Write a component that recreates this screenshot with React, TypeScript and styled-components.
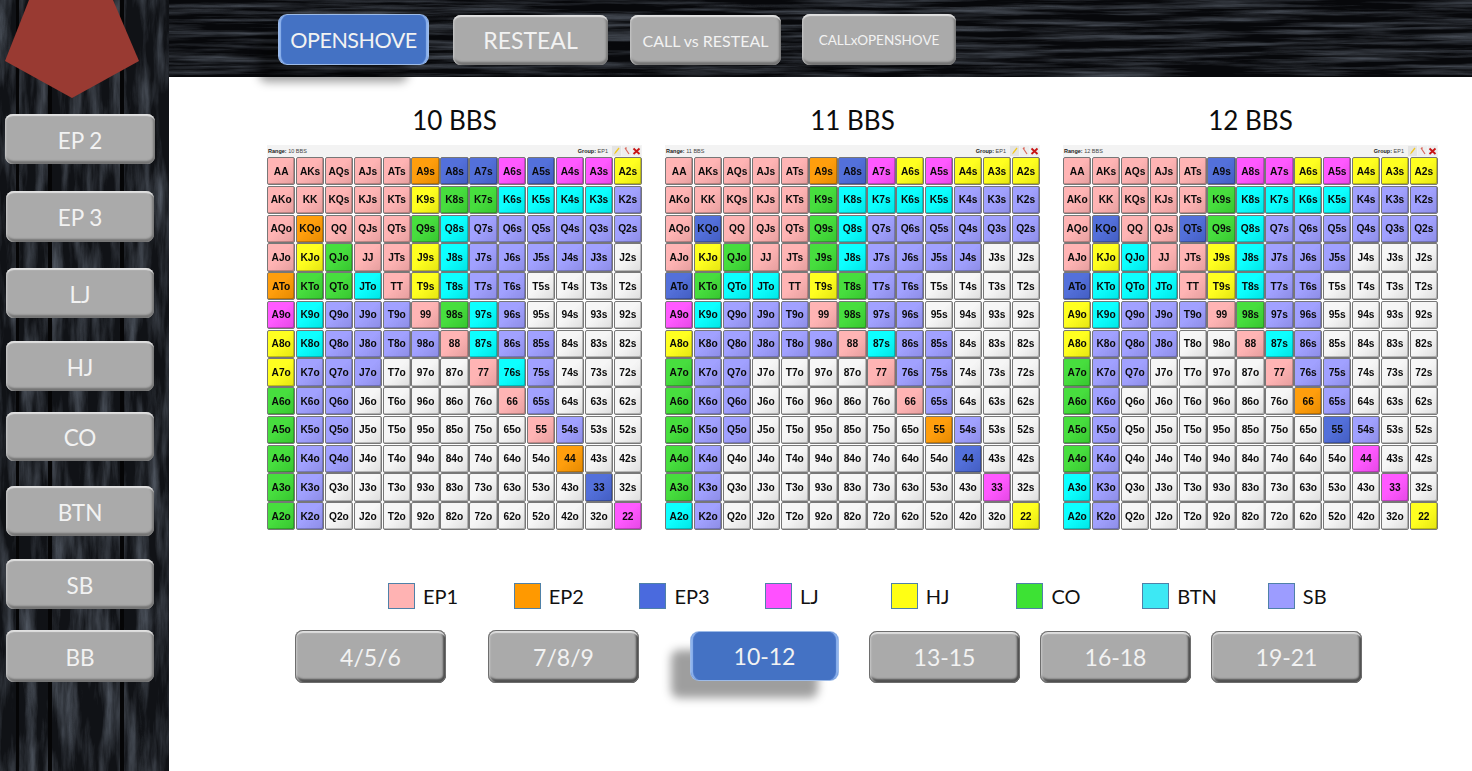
import React from "react";
import styled, { createGlobalStyle, css } from "styled-components";

const woodTexture = (freq: string, seed: number) =>
  `url("data:image/svg+xml,%3Csvg xmlns='http://www.w3.org/2000/svg' width='1400' height='800'%3E%3Cfilter id='w'%3E%3CfeTurbulence type='fractalNoise' baseFrequency='${freq}' numOctaves='5' seed='${seed}'/%3E%3CfeColorMatrix values='0 0 0 0 .17 0 0 0 0 .2 0 0 0 0 .25 1.3 0 0 0 -.5'/%3E%3C/filter%3E%3Crect width='1400' height='800' filter='url(%23w)'/%3E%3C/svg%3E")`;

const GlobalStyle = createGlobalStyle`
  html, body {
    margin: 0;
    padding: 0;
    background: #fff;
    overflow: hidden;
  }
  * {
    box-sizing: border-box;
  }
`;

const Page = styled.div`
  display: grid;
  grid-template-columns: 169px 1fr;
  width: 1472px;
  height: 771px;
  font-family: Lato, "Liberation Sans", sans-serif;
  overflow: hidden;
`;

const Sidebar = styled.aside`
  display: flex;
  flex-direction: column;
  align-items: flex-start;
  background-color: #101216;
  background-image:
    linear-gradient(
      90deg,
      transparent 16px,
      #050506 16px,
      #050506 19px,
      transparent 19px,
      transparent 48px,
      #050506 48px,
      #050506 52px,
      transparent 52px,
      transparent 120px,
      #050506 120px,
      #050506 124px,
      transparent 124px
    ),
    ${woodTexture("0.08 0.012", 4)};
`;

const Logo = styled.svg`
  display: block;
  width: 143px;
  height: 98px;
  margin-bottom: 16px;
  flex: none;
`;

const Content = styled.div`
  display: flex;
  flex-direction: column;
  min-width: 0;
`;

const TopBar = styled.nav`
  position: relative;
  z-index: 1;
  display: flex;
  align-items: flex-start;
  height: 77px;
  padding: 15px 0 0 110px;
  background-color: #07080b;
  background-image: ${woodTexture("0.008 0.2", 9)};
`;

const bevel = css`
  background: #aaaaaa;
  box-shadow:
    inset 0 4px 1px -2px #e0e0e0,
    inset 2px 0 2px -1px #c8c8c8,
    inset -3px 0 2px -1px #7a7a7a,
    inset 0 -4px 2px -1px #727272;
`;

const active = css`
  background: #4472c4;
  box-shadow:
    inset 3px 0 1px -1px #8fb4ee,
    inset -3px 0 1px -1px #8fb4ee,
    0 0 0 1px #9dbbe8,
    -20px 18px 10px rgba(0, 0, 0, 0.38);
`;

const Button = styled.button<{ $active?: boolean; $w: number; $h: number; $gap?: number; $size: number; $edge?: boolean; $track?: number }>`
  display: flex;
  align-items: center;
  justify-content: center;
  flex: none;
  width: ${(p) => p.$w}px;
  height: ${(p) => p.$h}px;
  margin: 0;
  padding: 0;
  border: none;
  border-radius: 8px;
  font-family: inherit;
  font-size: ${(p) => p.$size}px;
  letter-spacing: ${(p) => p.$track ?? 0}px;
  color: #f2f2f2;
  ${(p) => (p.$active ? active : bevel)}
  ${(p) =>
    p.$edge &&
    !p.$active &&
    css`
      box-shadow:
        inset 0 0 0 1px #6e6e6e,
        inset 0 4px 1px -1px #dedede,
        inset 3px 0 2px -1px #c8c8c8,
        inset -4px 0 2px -1px #4e4e4e,
        inset 0 -5px 2px -1px #505050;
    `}
`;

const SideButton = styled(Button)<{ $top: number; $left: number }>`
  margin-top: ${(p) => p.$top}px;
  margin-left: ${(p) => p.$left}px;
  padding-top: 2px;
`;

const SpacedButton = styled(Button)<{ $left: number; $top?: number }>`
  margin-left: ${(p) => p.$left}px;
  margin-top: ${(p) => p.$top ?? 0}px;
`;

const Main = styled.main`
  flex: 1;
  padding: 24px 0 0 98px;
  background: #fff;
`;

const Charts = styled.div`
  display: grid;
  grid-template-columns: repeat(3, 375px);
  column-gap: 23px;
`;

const ChartBlock = styled.section`
  display: flex;
  flex-direction: column;
`;

const Title = styled.h2`
  margin: 0 0 8px;
  height: 36px;
  line-height: 38px;
  font-size: 26px;
  font-weight: 400;
  text-align: center;
  color: #0c0c0c;
`;

const ChartHeader = styled.div`
  display: flex;
  align-items: center;
  justify-content: space-between;
  height: 12px;
  padding: 0 1px;
  background: #f3f3f3;
  font-family: "Liberation Sans", sans-serif;
  font-size: 5.5px;
  color: #444;

  b {
    color: #222;
  }
`;

const HeaderRight = styled.div`
  display: flex;
  align-items: center;
  gap: 4px;
`;

const HeaderIcons = styled.div`
  display: flex;
  align-items: center;
  gap: 1px;
`;

const ToolIcon = styled.svg`
  display: block;
  width: 9px;
  height: 10px;
`;

const Grid = styled.div`
  display: grid;
  grid-template-columns: repeat(13, 1fr);
  grid-auto-rows: 28.25px;
  gap: 0.5px;
  background: #fff;
  filter: blur(0.3px);
`;

const cellColors: Record<string, string> = {
  P: "#ffb0b0",
  O: "#ff9900",
  B: "#4a68d8",
  M: "#ff50ff",
  Y: "#ffff14",
  G: "#3ddc34",
  C: "#00ffff",
  S: "#9c9cff",
  W: "#f6f6f6",
};

const Cell = styled.div<{ $c: string }>`
  display: flex;
  align-items: center;
  justify-content: center;
  border: 1px solid #777;
  border-radius: 2px;
  background-color: ${(p) => cellColors[p.$c]};
  background-image: linear-gradient(135deg, rgba(255, 255, 255, 0.05) 45%, rgba(0, 0, 0, 0.1));
  box-shadow: inset -1px -1px 0 rgba(0, 0, 0, 0.22);
  font-family: "Liberation Sans", sans-serif;
  font-size: 10.2px;
  font-weight: 700;
  color: #0a0a0a;
`;

const Legend = styled.div`
  display: grid;
  grid-template-columns: repeat(8, 125.7px);
  margin: 53px 0 0 121px;
`;

const LegendItem = styled.div`
  display: flex;
  align-items: center;
  gap: 8px;
  height: 26px;
  font-size: 20px;
  color: #111;
`;

const Swatch = styled.span<{ $color: string }>`
  width: 27px;
  height: 26px;
  border: 1.5px solid #4f81a8;
  background: ${(p) => p.$color};
`;

const RangeRow = styled.div`
  display: flex;
  align-items: flex-start;
  margin-top: 21px;
  margin-left: 28px;
`;

const ranks = "AKQJT98765432".split("");

const handName = (row: number, col: number) => {
  if (row === col) return ranks[row] + ranks[col];
  return row < col ? ranks[row] + ranks[col] + "s" : ranks[col] + ranks[row] + "o";
};

const charts = [
  {
    name: "10 BBS",
    rows: [
      "PPPPPOBBMBMMY",
      "PPPPPYGGCCCCS",
      "POPPPGCSSSSSS",
      "PYGPPYCSSSSSW",
      "OGGCPYCSSWWWW",
      "MCSSSPGCSWWWW",
      "YCSSSSPCSSWWW",
      "YSSSWWWPCSWWW",
      "GSSWWWWWPSWWW",
      "GSSWWWWWWPSWW",
      "GSSWWWWWWWOWW",
      "GSWWWWWWWWWBW",
      "GSWWWWWWWWWWM",
    ],
  },
  {
    name: "11 BBS",
    rows: [
      "PPPPPOBMYMYYY",
      "PPPPPGCCCCSSS",
      "PBPPPGCSSSSSS",
      "PYGPPGCSSSSWW",
      "BGCCPYGSSWWWW",
      "MCSSSPGSSWWWW",
      "YSSSSSPCSSWWW",
      "GSSWWWWPSSWWW",
      "GSSWWWWWPSWWW",
      "GSSWWWWWWOSWW",
      "GSWWWWWWWWBWW",
      "GSWWWWWWWWWMW",
      "CSWWWWWWWWWWY",
    ],
  },
  {
    name: "12 BBS",
    rows: [
      "PPPPPBMMYMYYY",
      "PPPPPGCCCCSSS",
      "PBPPBGCSSSSSS",
      "PYCPPYCSSSWWW",
      "BCCCPYCSSWWWW",
      "YCSSSPGSSWWWW",
      "YSSSWWPCSWWWW",
      "GSSWWWWPSSWWW",
      "GSWWWWWWOSWWW",
      "GSWWWWWWWBSWW",
      "GSWWWWWWWWMWW",
      "CSWWWWWWWWWMW",
      "CSWWWWWWWWWWY",
    ],
  },
];

const sideButtons = [
  { label: "EP 2", top: 0, left: 5, w: 150, h: 50 },
  { label: "EP 3", top: 27, left: 6, w: 148, h: 51 },
  { label: "LJ", top: 26, left: 6, w: 148, h: 50 },
  { label: "HJ", top: 23, left: 6, w: 148, h: 50 },
  { label: "CO", top: 21, left: 6, w: 148, h: 49 },
  { label: "BTN", top: 25, left: 6, w: 148, h: 50 },
  { label: "SB", top: 23, left: 6, w: 148, h: 50 },
  { label: "BB", top: 21, left: 6, w: 148, h: 52 },
];

const topButtons = [
  { label: "OPENSHOVE", left: 0, top: 0, w: 149, h: 49, size: 21.5, track: -0.5, active: true },
  { label: "RESTEAL", left: 25, top: 0, w: 155, h: 50, size: 23 },
  { label: "CALL vs RESTEAL", left: 22, top: 0, w: 151, h: 50, size: 16 },
  { label: "CALLxOPENSHOVE", left: 21, top: -1, w: 154, h: 51, size: 13.5 },
];

const legend = [
  { label: "EP1", color: "#ffb3b3" },
  { label: "EP2", color: "#ff9900" },
  { label: "EP3", color: "#4a6ade" },
  { label: "LJ", color: "#ff50ff" },
  { label: "HJ", color: "#ffff14" },
  { label: "CO", color: "#3de234" },
  { label: "BTN", color: "#3de8f4" },
  { label: "SB", color: "#9c9cff" },
];

const rangeButtons = [
  { label: "4/5/6", left: 0, top: 0, w: 151, h: 53 },
  { label: "7/8/9", left: 42, top: 0, w: 151, h: 53 },
  { label: "10-12", left: 52, top: 2, w: 147, h: 48, active: true },
  { label: "13-15", left: 31, top: 1, w: 151, h: 52 },
  { label: "16-18", left: 20, top: 1, w: 151, h: 52 },
  { label: "19-21", left: 20, top: 1, w: 151, h: 52 },
];

function Chart({ name, rows }: { name: string; rows: string[] }) {
  return (
    <ChartBlock>
      <Title>{name}</Title>
      <ChartHeader>
        <span>
          <b>Range:</b> {name}
        </span>
        <HeaderRight>
          <span>
            <b>Group:</b> EP1
          </span>
          <HeaderIcons>
            <ToolIcon viewBox="0 0 9 10">
              <rect width="9" height="10" fill="#e4e4e4" />
              <path d="M2 8.5 L3 6 L6.5 1.5 L7.5 2.5 L4 7 Z" fill="#f2c81e" />
            </ToolIcon>
            <ToolIcon viewBox="0 0 9 10">
              <rect width="9" height="10" fill="#eeeeee" />
              <path d="M3 2 L7 8 M3 2 L5 2" stroke="#d9685c" strokeWidth="1.2" fill="none" />
            </ToolIcon>
            <ToolIcon viewBox="0 0 9 10">
              <rect width="9" height="10" fill="#eeeeee" />
              <path d="M1.5 2.5 L7.5 8 M7.5 2.5 L1.5 8" stroke="#c81414" strokeWidth="1.8" />
            </ToolIcon>
          </HeaderIcons>
        </HeaderRight>
      </ChartHeader>
      <Grid>
        {rows.map((row, r) =>
          row.split("").map((c, col) => (
            <Cell key={`${r}-${col}`} $c={c}>
              {handName(r, col)}
            </Cell>
          ))
        )}
      </Grid>
    </ChartBlock>
  );
}

export default function App() {
  return (
    <Page>
      <GlobalStyle />
      <Sidebar>
        <Logo viewBox="0 0 143 98">
          <polygon points="29,0 113,0 139,61 72,98 5,61" fill="#993a32" />
        </Logo>
        {sideButtons.map((b) => (
          <SideButton key={b.label} $top={b.top} $left={b.left} $w={b.w} $h={b.h} $size={22.5}>
            {b.label}
          </SideButton>
        ))}
      </Sidebar>
      <Content>
        <TopBar>
          {topButtons.map((b) => (
            <SpacedButton
              key={b.label}
              $left={b.left}
              $top={b.top}
              $w={b.w}
              $h={b.h}
              $size={b.size}
              $track={b.track}
              $active={b.active}
            >
              {b.label}
            </SpacedButton>
          ))}
        </TopBar>
        <Main>
          <Charts>
            {charts.map((c) => (
              <Chart key={c.name} name={c.name} rows={c.rows} />
            ))}
          </Charts>
          <Legend>
            {legend.map((l) => (
              <LegendItem key={l.label}>
                <Swatch $color={l.color} />
                {l.label}
              </LegendItem>
            ))}
          </Legend>
          <RangeRow>
            {rangeButtons.map((b) => (
              <SpacedButton
                key={b.label}
                $left={b.left}
                $top={b.top}
                $w={b.w}
                $h={b.h}
                $size={23}
                $active={b.active}
                $edge
              >
                {b.label}
              </SpacedButton>
            ))}
          </RangeRow>
        </Main>
      </Content>
    </Page>
  );
}
